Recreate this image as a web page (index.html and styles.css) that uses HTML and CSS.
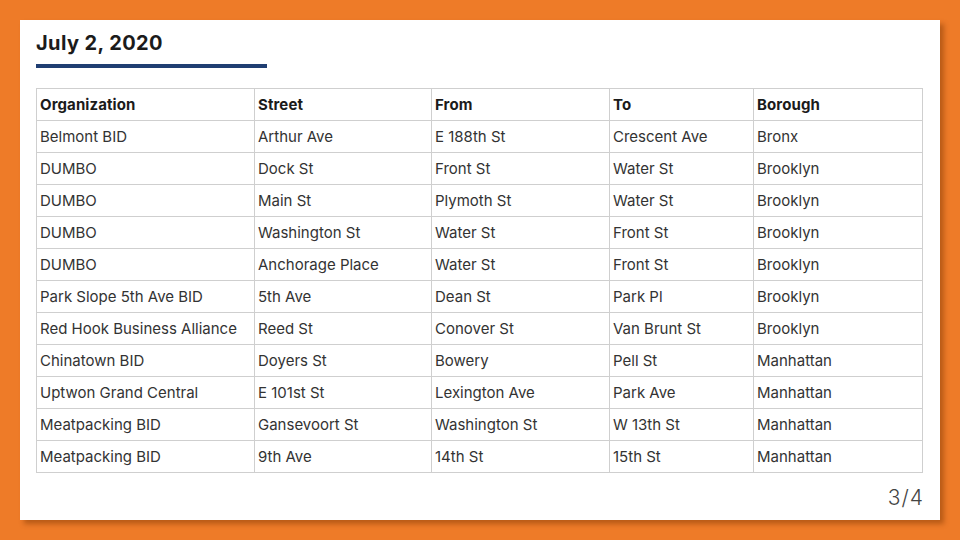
FILE: index.html
```html
<!DOCTYPE html>
<html>
<head>
<meta charset="utf-8">
<link rel="stylesheet" href="styles.css">
</head>
<body>
<div class="slide">
  <h1 class="title">July 2, 2020</h1>
  <div class="rule"></div>
  <table class="grid">
    <colgroup>
      <col class="c1"><col class="c2"><col class="c3"><col class="c4"><col class="c5">
    </colgroup>
    <thead>
      <tr><th>Organization</th><th>Street</th><th>From</th><th>To</th><th>Borough</th></tr>
    </thead>
    <tbody>
      <tr><td>Belmont BID</td><td>Arthur Ave</td><td>E 188th St</td><td>Crescent Ave</td><td>Bronx</td></tr>
      <tr><td>DUMBO</td><td>Dock St</td><td>Front St</td><td>Water St</td><td>Brooklyn</td></tr>
      <tr><td>DUMBO</td><td>Main St</td><td>Plymoth St</td><td>Water St</td><td>Brooklyn</td></tr>
      <tr><td>DUMBO</td><td>Washington St</td><td>Water St</td><td>Front St</td><td>Brooklyn</td></tr>
      <tr><td>DUMBO</td><td>Anchorage Place</td><td>Water St</td><td>Front St</td><td>Brooklyn</td></tr>
      <tr><td>Park Slope 5th Ave BID</td><td>5th Ave</td><td>Dean St</td><td>Park Pl</td><td>Brooklyn</td></tr>
      <tr><td>Red Hook Business Alliance</td><td>Reed St</td><td>Conover St</td><td>Van Brunt St</td><td>Brooklyn</td></tr>
      <tr><td>Chinatown BID</td><td>Doyers St</td><td>Bowery</td><td>Pell St</td><td>Manhattan</td></tr>
      <tr><td>Uptwon Grand Central</td><td>E 101st St</td><td>Lexington Ave</td><td>Park Ave</td><td>Manhattan</td></tr>
      <tr><td>Meatpacking BID</td><td>Gansevoort St</td><td>Washington St</td><td>W 13th St</td><td>Manhattan</td></tr>
      <tr><td>Meatpacking BID</td><td>9th Ave</td><td>14th St</td><td>15th St</td><td>Manhattan</td></tr>
    </tbody>
  </table>
  <div class="pager">3/4</div>
</div>
</body>
</html>
```
FILE: styles.css
```css
html, body {
  margin: 0;
  padding: 0;
}
body {
  width: 960px;
  height: 540px;
  background: #ee7b28;
  padding: 20px;
  box-sizing: border-box;
  font-family: "Inter", "Liberation Sans", sans-serif;
  overflow: hidden;
}
.slide {
  width: 920px;
  height: 500px;
  background: #ffffff;
  box-sizing: border-box;
  padding: 11px 18px 0 16px;
  box-shadow: 4px 4px 5px rgba(120, 50, 0, 0.45);
  display: flex;
  flex-direction: column;
}
.title {
  margin: 0;
  font-size: 20px;
  font-weight: 700;
  line-height: 24px;
  color: #1b1b1b;
  letter-spacing: 0.4px;
}
.rule {
  width: 231px;
  height: 4px;
  background: #1f3e72;
  margin-top: 9px;
  margin-bottom: 20px;
}
.grid {
  border-collapse: collapse;
  width: 886px;
  table-layout: fixed;
  color: #333;
  font-size: 15px;
}
.c1 { width: 218px; }
.c2 { width: 177px; }
.c3 { width: 178px; }
.c4 { width: 144px; }
.c5 { width: 169px; }
.grid th, .grid td {
  border: 1px solid #cfcfcf;
  height: 32px;
  padding: 0 0 0 3px;
  text-align: left;
  white-space: nowrap;
  box-sizing: border-box;
}
.grid th {
  font-weight: 700;
  color: #1b1b1b;
  letter-spacing: 0.1px;
}
.grid td {
  font-weight: 400;
  letter-spacing: 0;
}
.pager {
  align-self: flex-end;
  margin-top: 12px;
  margin-right: -2px;
  font-size: 21px;
  font-weight: 300;
  color: #444;
  letter-spacing: 1px;
}
```
